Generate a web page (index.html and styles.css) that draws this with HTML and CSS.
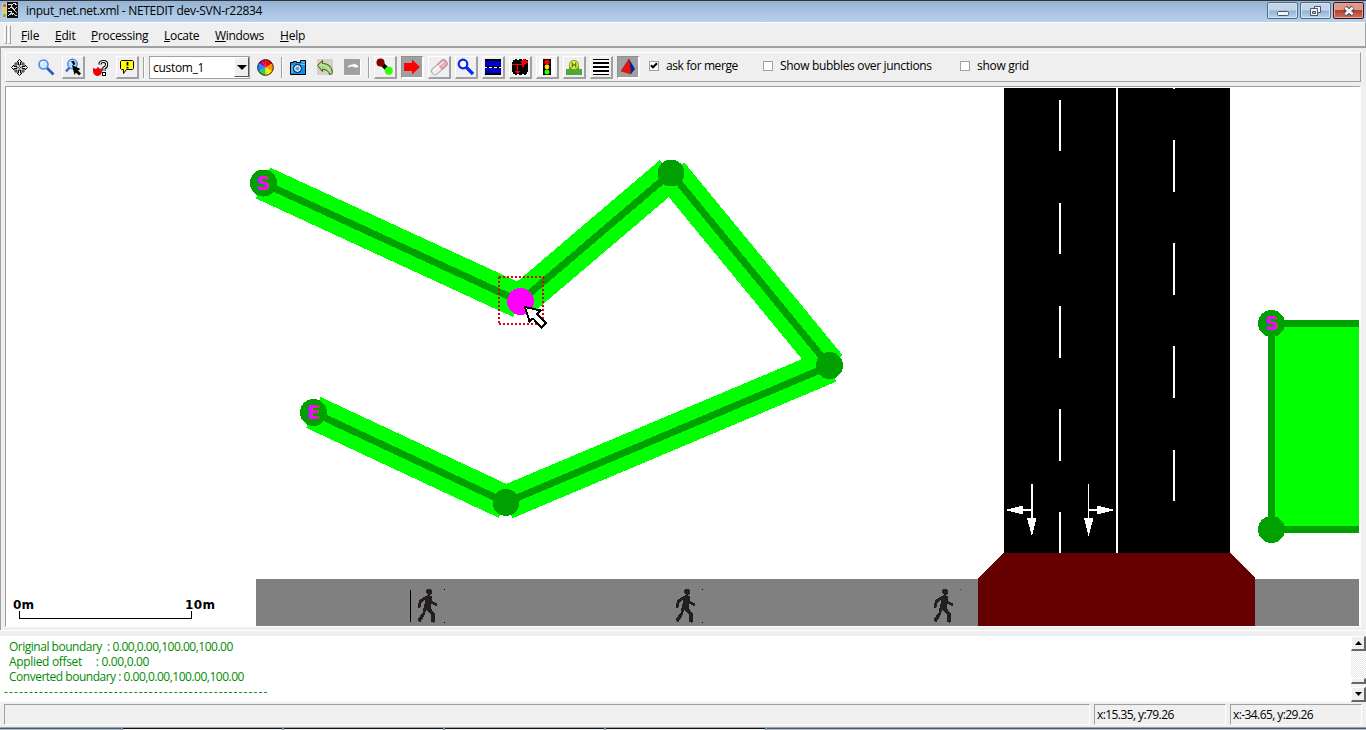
FILE: index.html
```html
<!DOCTYPE html>
<html lang="en">
<head>
<meta charset="utf-8">
<title>input_net.net.xml - NETEDIT dev-SVN-r22834</title>
<link rel="stylesheet" href="styles.css">
</head>
<body>
<div class="window">
  <header class="titlebar">
    <svg class="app-icon" width="16" height="18" viewBox="0 0 16 18" shape-rendering="crispEdges">
      <rect x="0" y="1" width="5" height="15" fill="#d8cda8"/><rect x="1" y="2" width="3" height="3" fill="#d96a50"/><rect x="1" y="7" width="3" height="3" fill="#efc63c"/><rect x="1" y="12" width="3" height="3" fill="#75b84e"/>
      <rect x="5" y="0" width="11" height="16" fill="#111"/><path d="M6 2l4 1 2-2 3 2M6 7l4-2 2 3 3-3M6 10l3-1 2 4M6 14l4-3 5 3M12 8l3 3M9 3v3" stroke="#ddd" fill="none"/>
    </svg>
    <span class="title">input_net.net.xml - NETEDIT dev-SVN-r22834</span>
    <div class="controls">
      <button class="control" aria-label="Minimize"><svg width="30" height="16"><rect x="9.500" y="8.500" width="11" height="4" rx="1" fill="#f4f4f4" stroke="#4d5566"/></svg></button>
      <button class="control" aria-label="Restore"><svg width="30" height="16"><path d="M13.500 3.500h6v6h-6z" fill="#f4f4f4" stroke="#4d5566"/><path d="M9.500 5.500h7v7h-7z" fill="#f4f4f4" stroke="#4d5566"/><path d="M11.500 8.500h3v2h-3z" fill="#9ebcdb" stroke="#4d5566"/></svg></button>
      <button class="control close" aria-label="Close"><svg width="30" height="16"><path d="M11 4.500l8 7m0-7l-8 7" stroke="#454558" stroke-width="4.600"/><path d="M11.300 4.800l7.400 6.400m0-6.400l-7.400 6.400" stroke="#f4f4f4" stroke-width="2.800"/></svg></button>
    </div>
  </header>
  <nav class="menubar">
    <i class="grip"></i><i class="grip"></i>
    <span class="menu m-file"><u>F</u>ile</span><span class="menu m-edit"><u>E</u>dit</span><span class="menu m-proc"><u>P</u>rocessing</span><span class="menu m-loc"><u>L</u>ocate</span><span class="menu m-win"><u>W</u>indows</span><span class="menu m-help"><u>H</u>elp</span>
  </nav>
  <div class="workspace">
    <div class="toolbar">
      <span class="tool"><svg viewBox="0 0 23 23"><g fill="#fff" stroke="#000"><path id="pan-arrow" d="M11.500 3.500l2.500 2.500h-1.500v3h-2v-3h-1.500z"/><use href="#pan-arrow" transform="rotate(90 11.500 11.500)"/><use href="#pan-arrow" transform="rotate(180 11.500 11.500)"/><use href="#pan-arrow" transform="rotate(270 11.500 11.500)"/><path d="M11.500 10.500l1 1-1 1-1-1z"/></g><path d="M7 7h2v2h-2zM14 7h2v2h-2zM7 14h2v2h-2zM14 14h2v2h-2z" fill="#fff" stroke="#000" stroke-width=".8"/></svg></span>
      <span class="tool"><svg viewBox="0 0 23 23"><path d="M12 12l6.500 6.500" stroke="#3154c4" stroke-width="2.600"/><circle cx="8.500" cy="8.500" r="4.500" fill="#cfeaff" stroke="#4c8af0" stroke-width="1.600"/><path d="M6 8q1-3 3-2.500" stroke="#fff" fill="none"/></svg></span>
      <span class="tool raised"><svg viewBox="0 0 23 23"><path d="M8 11l-4 4.500" stroke="#4169d8" stroke-width="2.600"/><circle cx="10.500" cy="8" r="4.700" fill="#b9ddff" stroke="#4c8af0" stroke-width="1.500"/><path d="M9 5h3l1.500 3-2 1.500-1-2z" fill="#111"/><path d="M10 9l8.500 4-2.500 1.500 3 3-2 2-3-3-1.500 2.500z" fill="#000"/></svg></span>
      <span class="tool"><svg viewBox="0 0 23 23"><path d="M11 8.500q0-3 3.500-3 3.500 0 3 3.500 0 2-2.500 3v3" fill="none" stroke="#000" stroke-width="3.200"/><path d="M11 8.500q0-3 3.500-3 3.500 0 3 3.500 0 2-2.500 3v3" fill="none" stroke="#fff" stroke-width="1.200"/><rect x="13.500" y="16.500" width="3" height="3" fill="#fff" stroke="#000"/><path d="M4 12l3 1 2-2 2 2 2-1v4q-1 4-5 4-4-1-4-5z" fill="#f00000"/></svg></span>
      <span class="tool raised"><svg viewBox="0 0 23 23"><path d="M5.500 4.500h11l1 1v7l-1 1h-6l-3 4v-4h-2l-1-1v-7z" fill="#ff0" stroke="#000"/><path d="M11.500 6v3.500M11.500 10.700v1.800" stroke="#000" stroke-width="1.800"/></svg></span>
      <i class="separator"></i>
      <div class="combo"><span>custom_1</span><button class="drop" aria-label="Open list"><svg width="11" height="6"><path d="M1 0h10l-5 5z"/></svg></button></div>
      <span class="tool"><svg viewBox="0 0 23 23"><path d="M11.500 11.500V3.500A8 8 0 0 1 18.400 7.500z" fill="#f00000"/><path d="M11.500 11.500L18.400 7.500A8 8 0 0 1 18.400 15.500z" fill="#ff9800"/><path d="M11.500 11.500L18.400 15.500A8 8 0 0 1 11.500 19.500z" fill="#ffe900"/><path d="M11.500 11.500V19.500A8 8 0 0 1 4.600 15.500z" fill="#40c840"/><path d="M11.500 11.500L4.600 15.500A8 8 0 0 1 4.600 7.500z" fill="#1790ff"/><path d="M11.500 11.500L4.600 7.500A8 8 0 0 1 8 4.300z" fill="#b000b0"/><path d="M11.500 11.500V3.500A8 8 0 0 0 8 4.300z" fill="#e00000"/><circle cx="11.500" cy="11.500" r="7.800" fill="none" stroke="#222"/></svg></span>
      <i class="separator"></i>
      <span class="tool"><svg viewBox="0 0 23 23"><path d="M3.500 6.500h3v-1h3v1h4v-2h5v14h-15z" fill="#1690e8" stroke="#000"/><path d="M14 6h4M14 8.500h4" stroke="#6cd0ff"/><circle cx="10.500" cy="12.500" r="4" fill="#cdf0ff" stroke="#003" stroke-width="1"/><circle cx="10.500" cy="12.500" r="2" fill="#42a9e8"/><path d="M5 9v8" stroke="#73d0ff"/></svg></span>
      <span class="tool"><svg viewBox="0 0 23 23"><path d="M3 3h16v16H3z" fill="#d4d0c8"/><path d="M3.500 9.500l5-5v3q9 0 10 9-1 2-3 2-1-5-7-5v2z" fill="#acd57f" stroke="#315b20"/><path d="M6 9q6-1 10 6" fill="none" stroke="#dcefb8"/></svg></span>
      <span class="tool"><svg viewBox="0 0 23 23"><path d="M4 4h16v16H4z" fill="#fff"/><path d="M3 3h16v16H3z" fill="#a0a0a0"/><path d="M7 10.500q1-2 5-2l1-1 4 2v2h-3q-3-2-7 0z" fill="#fff"/></svg></span>
      <i class="separator"></i>
      <span class="tool raised"><svg viewBox="0 0 23 23"><path d="M7 7l8 8" stroke="#000" stroke-width="4"/><circle cx="6.500" cy="6.500" r="4" fill="#800000"/><circle cx="14.800" cy="14.800" r="4" fill="#3f0"/></svg></span>
      <span class="tool pressed"><svg viewBox="0 0 23 23"><path d="M3 7h8V3.500l8 7.500-8 7.500V15H3z" fill="#f00"/></svg></span>
      <span class="tool raised"><svg viewBox="0 0 23 23"><g transform="rotate(-42 11 11)"><rect x="2" y="8" width="18" height="7" rx="3" fill="#eee" stroke="#aaa"/><path d="M12 8h5q3 0 3 3.500t-3 3.500h-5z" fill="#f4aab4" stroke="#b98b92"/><path d="M4 10h14" stroke="#fff"/></g></svg></span>
      <span class="tool raised"><svg viewBox="0 0 23 23"><path d="M11 11l7 7" stroke="#0026ff" stroke-width="3.200"/><circle cx="8" cy="8" r="4.300" fill="#fff" stroke="#0026ff" stroke-width="2.200"/></svg></span>
      <span class="tool raised"><svg viewBox="0 0 23 23" shape-rendering="crispEdges"><path d="M3 3h16v16H3z"/><path d="M3 5h16v5H3zM3 12h16v5H3z" fill="#0000c8"/><path d="M3 10h16v2H3z"/><path d="M3 11.500h2M7 11.500h3M12 11.500h3M17 11.500h2" stroke="#fff"/></svg></span>
      <span class="tool raised"><svg viewBox="0 0 23 23" shape-rendering="crispEdges"><path d="M3 3h16v16H3z"/><path d="M3 3.500h3M8 3.500h2M13 3.500h2M17 3.500h2M3 18.500h3M8 18.500h2M13 18.500h2M17 18.500h2M3.500 3v3M3.500 16v3M18.500 16v3" stroke="#fff"/><path d="M3 8.500h11M8.500 9v8M12 6h7M14 4v7" stroke="#f00" stroke-width="1.500" fill="none"/><path d="M14 3h2l2 3-2 3h-2zM5 15h7l-3.500 3z" fill="#f00"/></svg></span>
      <span class="tool raised"><svg viewBox="0 0 23 23"><path d="M3 3h16v16H3z" fill="#fff"/><path d="M7 3h8v16H7z"/><circle cx="11" cy="6" r="2.600" fill="#f00"/><circle cx="11" cy="11" r="2.400" fill="#ffe000"/><circle cx="11" cy="16" r="2.500" fill="#3f0"/></svg></span>
      <span class="tool raised"><svg viewBox="0 0 23 23"><path d="M3 13h3v-3a5.600 5.600 0 0 1 10 0v3h3v6H3z" fill="#52a636"/><circle cx="11" cy="9" r="5" fill="#52a636"/><circle cx="11" cy="9" r="4.300" fill="#ffe02a"/><path d="M9.300 6.500v5M12.700 6.500v5M9.300 9h3.400" stroke="#438b2d" stroke-width="1.300"/></svg></span>
      <span class="tool raised"><svg viewBox="0 0 23 23" shape-rendering="crispEdges"><path d="M3 3h16v16H3z" fill="#fff"/><path d="M3 3h16v1H3zM3 6h16v2H3zM3 10h16v2H3zM3 14h16v2H3zM3 18h16v1H3z"/></svg></span>
      <span class="tool pressed"><svg viewBox="0 0 23 23"><path d="M12 3l6 10-4 5z" fill="#002a90"/><path d="M12 3l2 15-10-3z" fill="#f01010" stroke="#901010" stroke-width=".5"/></svg></span>
      <label class="check c1"><i class="box"><svg width="8" height="8"><path d="M1 3.200l2 2 4-4" fill="none" stroke="#000" stroke-width="2.200"/></svg></i><span>ask for merge</span></label>
      <label class="check c2"><i class="box"></i><span>Show bubbles over junctions</span></label>
      <label class="check c3"><i class="box"></i><span>show grid</span></label>
    </div>
    <main class="view">
      <svg class="network" viewBox="6 87 1353 539" width="1353" height="539" shape-rendering="crispEdges">
        <defs>
          <g id="walker" fill="#231f20"><circle cx="428.600" cy="591.800" r="3"/><path d="M425 596l3-1 3 1 1 5 5 3-1 2-5-2-1 4 4 5 1 8-2 2-2-1-1-8-4-4-3 7-3 5-3-1 1-3 4-5 2-9v-4l-3 3-1 4-2 1-1-2 2-6z"/></g>
        </defs>
        <path class="walk" d="M256 579h1103v47H256z"/>
        <path d="M410.500 590v32" stroke="#000"/>
        <use href="#walker" x=".5"/><use href="#walker" x="258.500"/><use href="#walker" x="516.500"/>
        <path d="M444 589h1v1h-1zM444 622h1v1h-1zM702 589h1v1h-1zM702 622h1v1h-1z"/><path d="M960 589h1v1h-1z" fill="#444"/>
        <path d="M1004 88h226v465h-226z"/>
        <path class="junction" d="M978 626v-48l26-25h226l25 25v48z"/>
        <g fill="#fff">
          <path d="M1116 88h2v465h-2zM1059 100h2v51h-2zM1059 203h2v51h-2zM1059 306h2v52h-2zM1059 409h2v52h-2zM1059 512h2v41h-2zM1173 88h2v1h-2zM1173 140h2v52h-2zM1173 243h2v52h-2zM1173 346h2v52h-2zM1173 450h2v51h-2z"/>
          <path d="M1031 484h2v34h3.500l-4.500 18.500-5-18.500h4v-7h-8v3.500l-18-4.500 18-4.500v3.500h8zM1088 484h1v25h8v-3.500l18 4.500-18 4.500v-3.500h-8v7h4.500l-5 18.500-4.500-18.500h4z"/>
        </g>
        <g class="band"><path d="M263 183L520 301.500"/><path d="M520 301.500L671 173"/><path d="M671 173L829.500 366"/><path d="M829.500 366L506 502.500"/><path d="M506 502.500L313.500 412.500"/></g>
        <path class="axis" d="M263 183L520 301.500 671 173 829.500 366 506 502.500 313.500 412.500"/>
        <g class="node"><circle cx="263.500" cy="183" r="13.500"/><circle cx="671" cy="173" r="13.500"/><circle cx="829.500" cy="365.500" r="13.500"/><circle cx="506" cy="502.500" r="13.500"/><circle cx="313.500" cy="412.500" r="13.500"/></g>
        <circle cx="520.500" cy="301.500" r="13.500" fill="#f0f"/>
        <path d="M1271.500 323.500H1370V529.500H1271.500z" fill="#0f0" stroke="#00a000" stroke-width="7"/>
        <g class="node"><circle cx="1271.500" cy="323.500" r="13.500"/><circle cx="1271.500" cy="529.500" r="13.500"/></g>
        <g class="mark"><text x="263" y="190">S</text><text x="313.500" y="419">E</text><text x="1271.500" y="330">S</text></g>
        <path d="M499 277H544M499 324H544M499 277V325M543 277V325" fill="none" stroke="#e00010" stroke-width="2" stroke-dasharray="2 2"/>
        <path class="pointer" d="M525 307l4.500 14.500 3.500-3 8.500 9 4.500-4.500-9-9 3.500-3.500z"/>
        <path d="M19.500 611V618.500H191.500V611" fill="none" stroke="#000"/>
        <g class="scale"><text x="13" y="609" textLength="21">0m</text><text x="185" y="609" textLength="30">10m</text></g>
      </svg>
    </main>
  </div>
  <section class="messages">
    <div class="log"><p>Original boundary&nbsp; : 0.00,0.00,100.00,100.00</p><p class="offset">Applied offset&nbsp; &nbsp;&nbsp; : 0.00,0.00</p><p>Converted boundary : 0.00,0.00,100.00,100.00</p><p class="rule">-----------------------------------------------------</p></div>
    <div class="scrollbar"><span class="arrow"><svg width="7" height="4"><path d="M0 4l3.500-4 3.500 4z"/></svg></span><span class="thumb"></span><span class="arrow"><svg width="7" height="4"><path d="M0 0h7l-3.500 4z"/></svg></span></div>
  </section>
  <footer class="status"><div class="cell main"></div><div class="cell">x:15.35, y:79.26</div><div class="cell">x:-34.65, y:29.26</div></footer>
  <div class="taskbar"><i class="start"></i><i></i><i></i><i></i><i></i><i class="tray"></i></div>
</div>
</body>
</html>
```
FILE: styles.css
```css
* { box-sizing: border-box; }
body { margin: 0; font: 12px/15px "Open Sans", "Noto Sans", sans-serif; color: #000; overflow: hidden; }
svg { display: block; }
button { padding: 0; margin: 0; }
p { margin: 0; }
.window { width: 1366px; height: 730px; display: flex; flex-direction: column; background: #efefef; overflow: hidden; }
.titlebar { height: 22px; display: flex; padding-left: 2px; border-top: 1px solid #353535; background: linear-gradient(#94b2d3, #a9c5e3 55%, #b7d0ea); }
.app-icon { margin-top: 1px; }
.title { margin: 2px 0 0 8px; white-space: nowrap; letter-spacing: -.3px; }
.controls { display: flex; gap: 2px; margin: 1px 2px 0 auto; }
.control { width: 31px; height: 17px; border: 1px solid #52698b; border-radius: 2px; background: linear-gradient(#c1d4ea 48%, #93b2d3 52%, #b8d3ec); box-shadow: inset 0 0 0 1px #d5e4f3; overflow: hidden; }
.close { border-color: #431219; background: linear-gradient(#d99a8c 46%, #b93e28 50%, #ce7160); box-shadow: inset 0 0 0 1px #e0a69b; }
.menubar { height: 26px; display: flex; align-items: center; padding: 0 0 0 4px; border-top: 1px solid #fff; border-right: 1px solid #a0a0a0; border-bottom: 2px solid #a0a0a0; white-space: nowrap; }
.grip { width: 3px; height: 19px; margin-right: 1px; border: 1px solid #fff; border-right-color: #a0a0a0; border-bottom-color: #a0a0a0; }
.menu { margin-right: 16px; padding-top: 1px; }
.m-file { margin-left: 9px; width: 18px; letter-spacing: -.2px; }
.m-edit { width: 20px; letter-spacing: -.2px; }
.m-proc { width: 57px; letter-spacing: -.3px; }
.m-loc { width: 35px; letter-spacing: -.3px; }
.m-win { width: 49px; letter-spacing: -.3px; }
.m-help { letter-spacing: -.2px; }
.menu u { text-underline-offset: 1px; text-decoration-thickness: 1px; }
.workspace { height: 582px; padding: 4px 5px 3px; border-left: 1px solid #a0a0a0; }
.toolbar { width: 1356px; height: 30px; margin-left: -1px; display: flex; gap: 4px; padding: 3px 0 0 2px; border: 1px solid #fff; border-right-color: #a0a0a0; border-bottom-color: #a0a0a0; }
.tool { width: 23px; height: 23px; flex: none; }
.tool svg { width: 23px; height: 23px; }
.raised { border: 1px solid #fff; border-right: 2px solid #a0a0a0; border-bottom: 2px solid #a0a0a0; }
.pressed { border: 1px solid #8f8f8f; border-right: 2px solid #fff; border-bottom: 2px solid #fff; background: #a0a0a0; }
.raised svg, .pressed svg { margin: -1px; }
.separator { width: 2px; height: 21px; margin: 1px 0; border-left: 1px solid #a0a0a0; border-right: 1px solid #fff; }
.combo { width: 101px; height: 23px; display: flex; justify-content: space-between; padding-left: 3px; border: 1px solid #a0a0a0; background: #fff; line-height: 22px; letter-spacing: -.3px; }
.drop { width: 15px; height: 20px; border: 1px solid #fff; border-right: 1px solid #555; border-bottom: 1px solid #555; background: #efefef; }
.drop svg { margin: 1px 0 0 1px; }
.check { height: 20px; display: flex; align-items: center; gap: 7px; white-space: nowrap; letter-spacing: -.3px; }
.check span { padding-bottom: 1px; }
.box { width: 10px; height: 10px; border: 1px solid #a0a0a0; background: #fff; }
.c1 { margin-left: 5px; width: 110px; letter-spacing: -.4px; }
.c2 { width: 193px; letter-spacing: -.33px; }
.view { width: 1356px; height: 541px; margin: 4px 0 0 -1px; border: 1px solid #a0a0a0; border-right: 2px solid #fff; border-bottom: 1px solid #fff; background: #fff; }
.walk { fill: #808080; }
.junction { fill: #640000; }
.band { fill: none; stroke: #0f0; stroke-width: 34; }
.axis { fill: none; stroke: #00a000; stroke-width: 7; }
.node { fill: #00a000; }
.mark { fill: #f0f; font: bold 19px "DejaVu Sans", sans-serif; text-anchor: middle; }
.pointer { fill: #fff; stroke: #000; stroke-width: 2; }
.scale { font: bold 12px "DejaVu Sans", sans-serif; }
.messages { height: 72px; display: flex; justify-content: space-between; border-top: 1px solid #fff; padding-top: 5px; background: linear-gradient(#efefef 5px, #fff 5px); }
.log { color: #008b00; padding: 3px 0 0 9px; white-space: nowrap; letter-spacing: -.49px; }
.offset { letter-spacing: -.33px; }
.rule { margin-left: -5px; letter-spacing: 1.13px; }
.scrollbar { width: 15px; height: 66px; display: flex; flex-direction: column; background: repeating-conic-gradient(#fff 0 25%, #e8e8e8 0 50%) 0 0 / 2px 2px; }
.arrow, .thumb { height: 15px; flex: none; border: 1px solid #fff; border-right: 2px solid #666; border-bottom: 2px solid #666; background: #efefef; }
.arrow svg { margin: 4px 0 0 3px; }
.thumb { height: 6px; margin: 27px 0 3px; }
.status { height: 26px; display: flex; gap: 4px; padding: 2px 4px; border-bottom: 1px solid #a0a0a0; }
.cell { width: 132px; height: 21px; padding: 2px 2px; border: 1px solid #a0a0a0; border-right-color: #fff; border-bottom-color: #fff; letter-spacing: -.58px; line-height: 15px; white-space: nowrap; }
.main { width: 1086px; }
.taskbar { height: 2px; display: flex; gap: 2px; background: #7a8ba0; }
.taskbar i { width: 159px; flex: none; border-top: 1px solid #111; background: #eef1f6; }
.taskbar .start { width: 121px; border-color: #4b5666; background: #adc2da; }
.taskbar .tray { flex: 1; border-color: #4b5666; background: #b8c8da; }
```
